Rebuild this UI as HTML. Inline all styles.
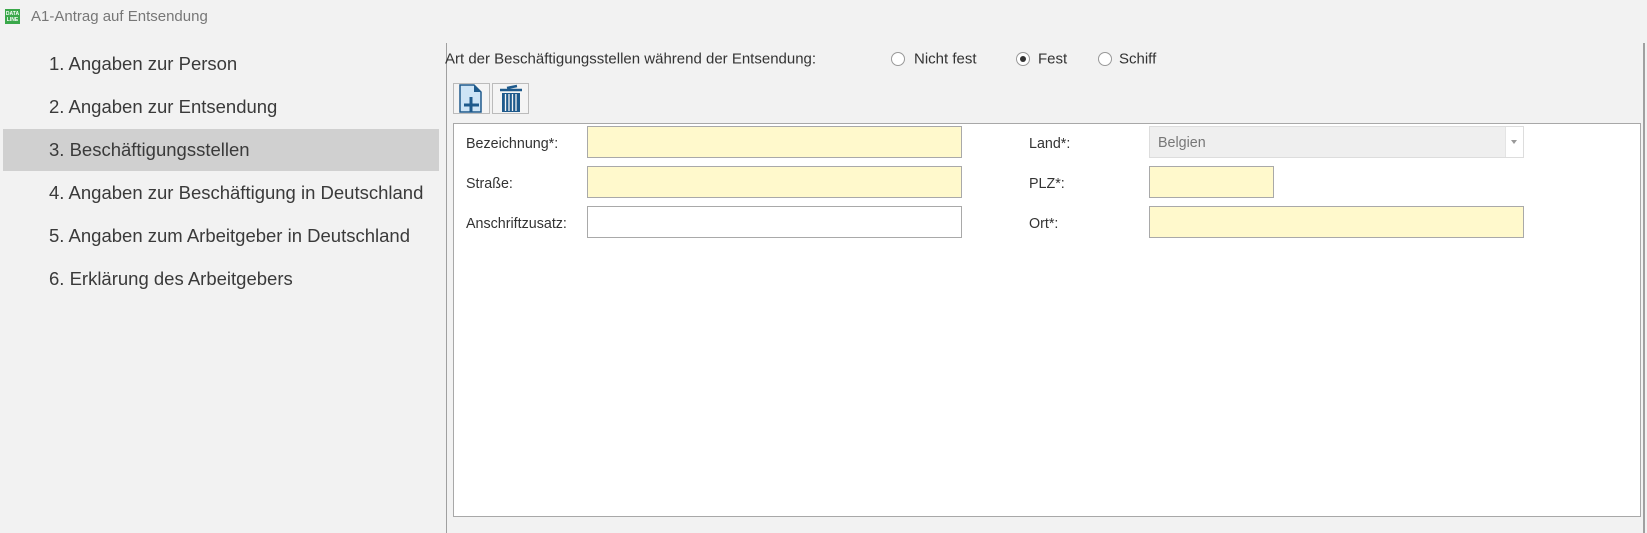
<!DOCTYPE html>
<html><head><meta charset="utf-8"><style>
*{margin:0;padding:0;box-sizing:border-box}
body{width:1647px;height:533px;background:#f2f2f2;font-family:"Liberation Sans",sans-serif;position:relative;overflow:hidden;color:#333}
.a{position:absolute}
.nav{position:absolute;left:49px;font-size:18.5px;color:#3a3a3a;transform:translateY(-50%);white-space:nowrap}
.lbl{position:absolute;font-size:14.3px;color:#333;transform:translateY(-50%);white-space:nowrap}
.fld{position:absolute;border:1px solid #a9a9a9;background:#fff9cc}
.rad{position:absolute;width:14px;height:14px;border:1px solid #999;border-radius:50%;background:#fff}
</style></head><body>
<div class="a" style="left:5px;top:9px;width:15px;height:15px;background:#3aa84a;color:#fff;font-size:5px;line-height:6px;text-align:center;font-weight:bold;padding-top:2px">DATA<br>LINE</div>
<div class="a" style="left:31px;top:8px;font-size:15px;color:#777">A1-Antrag auf Entsendung</div>

<div class="a" style="left:3px;top:129px;width:436px;height:42px;background:#d0d0d0"></div>
<div class="nav" style="top:64px">1. Angaben zur Person</div>
<div class="nav" style="top:107px">2. Angaben zur Entsendung</div>
<div class="nav" style="top:150px">3. Beschäftigungsstellen</div>
<div class="nav" style="top:193px">4. Angaben zur Beschäftigung in Deutschland</div>
<div class="nav" style="top:236px">5. Angaben zum Arbeitgeber in Deutschland</div>
<div class="nav" style="top:279px">6. Erklärung des Arbeitgebers</div>

<div class="a" style="left:446px;top:43px;width:1px;height:490px;background:#a0a0a0"></div>
<div class="a" style="left:1643px;top:43px;width:2px;height:490px;background:#a0a0a0"></div>

<div class="lbl" style="left:445px;top:59px;font-size:15px">Art der Beschäftigungsstellen während der Entsendung:</div>
<div class="rad" style="left:891px;top:52px"></div><div class="lbl" style="left:914px;top:59px;font-size:15px">Nicht fest</div>
<div class="rad" style="left:1016px;top:52px"><div class="a" style="left:3px;top:3px;width:6px;height:6px;border-radius:50%;background:#333"></div></div><div class="lbl" style="left:1038px;top:59px;font-size:15px">Fest</div>
<div class="rad" style="left:1098px;top:52px"></div><div class="lbl" style="left:1119px;top:59px;font-size:15px">Schiff</div>

<div class="a" style="left:453px;top:83px;width:37px;height:31px;border:1px solid #bbb;background:#f4f4f4">
<svg width="35" height="29" viewBox="0 0 35 29"><path d="M6 1h14l7 7v20H6z" fill="#cde4f6" stroke="#1e5a8c" stroke-width="1.5"/><path d="M20 1v7h7z" fill="#1e5a8c"/><path d="M17 13v15M10 21h15" stroke="#1e5a8c" stroke-width="3"/></svg></div>
<div class="a" style="left:492px;top:83px;width:37px;height:31px;border:1px solid #bbb;background:#f4f4f4">
<svg width="35" height="29" viewBox="0 0 35 29"><path d="M7 6h22M14 4l10-2" stroke="#1e5a8c" stroke-width="2.5"/><path d="M9 9h18v19H9z" fill="#1e5a8c"/><path d="M12.5 10v17M16 10v17M19.5 10v17M23 10v17" stroke="#f4f4f4" stroke-width="1.3"/></svg></div>

<div class="a" style="left:453px;top:123px;width:1188px;height:394px;border:1px solid #a8a8a8;background:#fff"></div>
<div class="lbl" style="left:466px;top:144px">Bezeichnung*:</div>
<div class="fld" style="left:587px;top:126px;width:375px;height:32px"></div>
<div class="lbl" style="left:466px;top:184px">Straße:</div>
<div class="fld" style="left:587px;top:166px;width:375px;height:32px"></div>
<div class="lbl" style="left:466px;top:224px">Anschriftzusatz:</div>
<div class="fld" style="left:587px;top:206px;width:375px;height:32px;background:#fff"></div>

<div class="lbl" style="left:1029px;top:144px">Land*:</div>
<div class="a" style="left:1149px;top:126px;width:375px;height:32px;border:1px solid #ddd;background:#efefef"><div class="a" style="left:8px;top:16px;transform:translateY(-50%);font-size:14.3px;color:#777">Belgien</div><div class="a" style="right:0;top:0;width:18px;height:30px;background:#fff;border-left:1px solid #e4e4e4"><div class="a" style="left:5px;top:13px;border-left:3px solid transparent;border-right:3px solid transparent;border-top:4px solid #999"></div></div></div>
<div class="lbl" style="left:1029px;top:184px">PLZ*:</div>
<div class="fld" style="left:1149px;top:166px;width:125px;height:32px"></div>
<div class="lbl" style="left:1029px;top:224px">Ort*:</div>
<div class="fld" style="left:1149px;top:206px;width:375px;height:32px"></div>
</body></html>
